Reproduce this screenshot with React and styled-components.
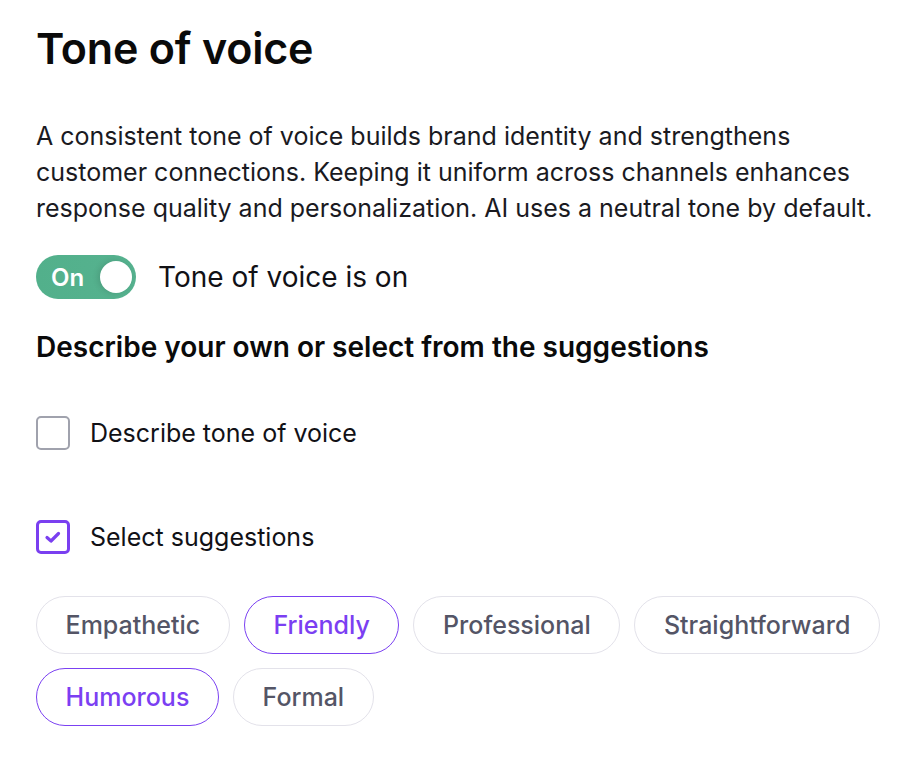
import React, { useState } from "react";
import styled, { createGlobalStyle } from "styled-components";

const GlobalStyle = createGlobalStyle`
    body {
        margin: 0;
        background: #ffffff;
        font-family: Inter, "Noto Sans", sans-serif;
        color: #0d0d12;
    }
`;

const Page = styled.div`
    display: flex;
    flex-direction: column;
    padding: 22px 20px 40px 36px;
    box-sizing: border-box;
    width: 918px;
`;

const Title = styled.h1`
    margin: 0;
    font-size: 43px;
    font-weight: 600;
    line-height: 52px;
    letter-spacing: -0.2px;
    color: #0a0a0a;
`;

const Intro = styled.p`
    margin: 44px 0 0 0;
    max-width: 840px;
    font-size: 25px;
    line-height: 36px;
    color: #1a1a1f;
`;

const ToggleRow = styled.label`
    display: flex;
    align-items: center;
    gap: 22px;
    margin-top: 29px;
    cursor: pointer;
`;

const Switch = styled.span`
    display: flex;
    align-items: center;
    justify-content: space-between;
    box-sizing: border-box;
    width: 100px;
    height: 44px;
    padding: 0 4px 0 15px;
    border-radius: 22px;
    background: ${(p) => (p.$on ? "linear-gradient(90deg, #52b08b 0%, #56b28f 100%)" : "#c9cad3")};
`;

const SwitchText = styled.span`
    font-size: 24px;
    font-weight: 600;
    color: #ffffff;
`;

const Knob = styled.span`
    width: 32px;
    height: 32px;
    border-radius: 50%;
    background: #ffffff;
    box-shadow: -2px 0 6px rgba(0, 0, 0, 0.12);
`;

const ToggleLabel = styled.span`
    font-size: 28px;
    line-height: 34px;
    color: #111116;
`;

const Subtitle = styled.h2`
    margin: 30px 0 0 0;
    font-size: 28px;
    font-weight: 600;
    line-height: 36px;
    color: #0a0a0a;
`;

const CheckRow = styled.label`
    display: flex;
    align-items: center;
    gap: 20px;
    margin-top: ${(p) => p.$top}px;
    cursor: pointer;
`;

const Box = styled.span`
    display: flex;
    align-items: center;
    justify-content: center;
    box-sizing: border-box;
    width: 34px;
    height: 34px;
    border-radius: 5px;
    border: ${(p) => (p.$checked ? "3px solid #7a3ff0" : "2px solid #a0a2ad")};
    color: #7a3ff0;
`;

const CheckLabel = styled.span`
    font-size: 25px;
    line-height: 30px;
    color: #111116;
`;

const Chips = styled.div`
    display: flex;
    flex-wrap: wrap;
    gap: 14px 14px;
    margin-top: 42px;
`;

const Chip = styled.button`
    height: 58px;
    padding: 0 28.6px;
    border-radius: 29px;
    background: #ffffff;
    border: 1px solid ${(p) => (p.$active ? "#7b41f2" : "#e3e2ea")};
    color: ${(p) => (p.$active ? "#7b3ff2" : "#545566")};
    font-family: Inter, "Noto Sans", sans-serif;
    font-size: 25px;
    font-weight: 500;
    cursor: pointer;
`;

const Check = () => (
    <svg width="20" height="20" viewBox="0 0 20 20" fill="none">
        <path d="M4 10.5 L8 14 L15.5 6.5" stroke="currentColor" strokeWidth="3.2" strokeLinecap="round" strokeLinejoin="round" />
    </svg>
);

const suggestions = ["Empathetic", "Friendly", "Professional", "Straightforward", "Humorous", "Formal"];

const App = () => {
    const [on, setOn] = useState(true);
    const [describe, setDescribe] = useState(false);
    const [select, setSelect] = useState(true);
    const [picked, setPicked] = useState(["Friendly", "Humorous"]);

    const toggle = (s) =>
        setPicked((cur) => (cur.includes(s) ? cur.filter((x) => x !== s) : [...cur, s]));

    return (
        <Page>
            <GlobalStyle />
            <Title>Tone of voice</Title>
            <Intro>
                A consistent tone of voice builds brand identity and strengthens customer connections. Keeping it
                uniform across channels enhances response quality and personalization. AI uses a neutral tone by
                default.
            </Intro>
            <ToggleRow onClick={() => setOn(!on)}>
                <Switch $on={on}>
                    <SwitchText>{on ? "On" : "Off"}</SwitchText>
                    <Knob />
                </Switch>
                <ToggleLabel>Tone of voice is {on ? "on" : "off"}</ToggleLabel>
            </ToggleRow>
            <Subtitle>Describe your own or select from the suggestions</Subtitle>
            <CheckRow $top={51} onClick={() => setDescribe(!describe)}>
                <Box $checked={describe}>{describe && <Check />}</Box>
                <CheckLabel>Describe tone of voice</CheckLabel>
            </CheckRow>
            <CheckRow $top={70} onClick={() => setSelect(!select)}>
                <Box $checked={select}>{select && <Check />}</Box>
                <CheckLabel>Select suggestions</CheckLabel>
            </CheckRow>
            <Chips>
                {suggestions.map((s) => (
                    <Chip key={s} $active={picked.includes(s)} onClick={() => toggle(s)}>
                        {s}
                    </Chip>
                ))}
            </Chips>
        </Page>
    );
};

export default App;
